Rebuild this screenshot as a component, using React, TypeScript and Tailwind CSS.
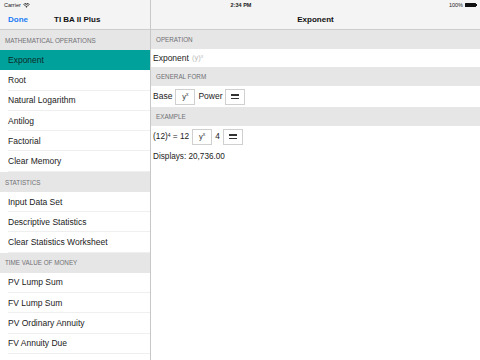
import React from "react";

const font = { fontFamily: '"Liberation Sans", Arial, sans-serif' };

function SectionHeader({ children }: { children: React.ReactNode }) {
  return (
    <div className="h-[20px] bg-[#e6e6e6] flex items-center pl-[5px] text-[6.3px] text-[#707075] pt-[1px]">
      {children}
    </div>
  );
}

function Row({ children, active }: { children: React.ReactNode; active?: boolean }) {
  return (
    <div className={"h-[20.3px] relative flex items-center pl-[8px] text-[8.5px] " + (active ? "bg-[#00a19a] text-[#0d2b2a]" : "bg-white text-[#1a1a1a]")}>
      {children}
      {!active && <div className="absolute left-[8px] right-0 bottom-0 h-px bg-[#efefef]" />}
    </div>
  );
}

function Box({ children }: { children: React.ReactNode }) {
  return (
    <div className="w-[20px] h-[16px] border border-[#cfcfcf] bg-white flex items-center justify-center text-[7.5px] text-[#333]">
      {children}
    </div>
  );
}

function Eq() {
  return (
    <div className="w-[20px] h-[16px] border border-[#cfcfcf] bg-white flex flex-col items-center justify-center gap-[2px]">
      <div className="w-[8px] h-[1.5px] bg-[#333]" />
      <div className="w-[8px] h-[1.5px] bg-[#333]" />
    </div>
  );
}

function RHeader({ children }: { children: React.ReactNode }) {
  return (
    <div className="h-[19px] bg-[#e6e6e6] flex items-center pl-[5px] pt-[1px] text-[6.3px] text-[#707075]">{children}</div>
  );
}

export default function App() {
  return (
    <div className="w-[480px] h-[360px] flex bg-white overflow-hidden" style={font}>
      {/* Sidebar */}
      <div className="w-[151px] shrink-0 border-r border-[#c8c8c8] flex flex-col">
        <div className="h-[30px] bg-[#f4f4f4] border-b border-[#cdcdcd] flex flex-col">
          <div className="h-[10px] flex items-center pl-[4px] gap-[2px] text-[5.5px] text-[#222]">
            <span>Carrier</span>
            <svg width="7" height="5" viewBox="0 0 14 10">
              <path d="M7 9.5 L4.8 7 A3.2 3.2 0 0 1 9.2 7 Z" fill="#222" />
              <path d="M2.8 5.2 A6 6 0 0 1 11.2 5.2" stroke="#222" strokeWidth="1.6" fill="none" />
              <path d="M0.8 3 A9 9 0 0 1 13.2 3" stroke="#222" strokeWidth="1.6" fill="none" />
            </svg>
          </div>
          <div className="flex-1 flex items-center">
            <span className="pl-[8px] text-[8px] font-bold text-[#1a7cf5]">Done</span>
            <span className="pl-[26px] text-[8px] font-bold text-[#111]">TI BA II Plus</span>
          </div>
        </div>
        <SectionHeader>MATHEMATICAL OPERATIONS</SectionHeader>
        <Row active>Exponent</Row>
        <Row>Root</Row>
        <Row>Natural Logarithm</Row>
        <Row>Antilog</Row>
        <Row>Factorial</Row>
        <Row>Clear Memory</Row>
        <SectionHeader>STATISTICS</SectionHeader>
        <Row>Input Data Set</Row>
        <Row>Descriptive Statistics</Row>
        <Row>Clear Statistics Worksheet</Row>
        <SectionHeader>TIME VALUE OF MONEY</SectionHeader>
        <Row>PV Lump Sum</Row>
        <Row>FV Lump Sum</Row>
        <Row>PV Ordinary Annuity</Row>
        <Row>FV Annuity Due</Row>
      </div>

      {/* Detail */}
      <div className="flex-1 flex flex-col">
        <div className="h-[30px] bg-[#f4f4f4] border-b border-[#cdcdcd] flex flex-col">
          <div className="h-[10px] flex items-center justify-between text-[5.5px] text-[#222]">
            <span className="w-[180px] text-center font-bold">2:34 PM</span>
            <div className="flex items-center gap-[2px] pr-[3px]">
              <span>100%</span>
              <div className="flex items-center">
                <div className="w-[11px] h-[4.5px] bg-[#111] rounded-[0.5px]" />
                <div className="w-[1px] h-[2px] bg-[#111]" />
              </div>
            </div>
          </div>
          <div className="flex-1 flex items-center justify-center text-[8px] font-bold text-[#111]">Exponent</div>
        </div>
        <RHeader>OPERATION</RHeader>
        <div className="h-[18px] flex items-center pl-[2px] text-[8.5px] text-[#222]">
          Exponent
          <span className="ml-[3px] text-[#bbbbbb] text-[7.5px]">
            (y)<sup className="text-[5px]">x</sup>
          </span>
        </div>
        <RHeader>GENERAL FORM</RHeader>
        <div className="h-[21px] flex items-center pl-[2px] gap-[3px] text-[8.5px] text-[#222]">
          <span>Base</span>
          <Box>
            y<sup className="text-[5px]">x</sup>
          </Box>
          <span>Power</span>
          <Eq />
        </div>
        <RHeader>EXAMPLE</RHeader>
        <div className="h-[21px] flex items-center pl-[2px] gap-[3px] text-[8.3px] text-[#222]">
          <span>
            (12)<sup className="text-[5px]">4</sup> = 12
          </span>
          <Box>
            y<sup className="text-[5px]">x</sup>
          </Box>
          <span>4</span>
          <Eq />
        </div>
        <div className="h-[20px] flex items-center pl-[2px] text-[8.2px] text-[#222]">Displays: 20,736.00</div>
      </div>
    </div>
  );
}
